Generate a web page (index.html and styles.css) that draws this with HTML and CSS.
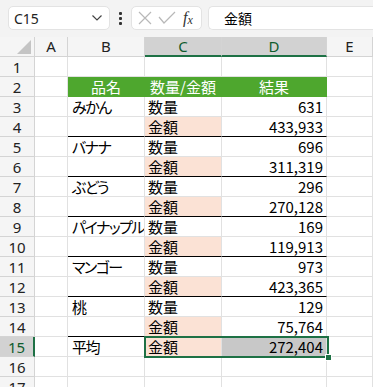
FILE: index.html
```html
<!DOCTYPE html>
<html lang="ja">
<head>
    <meta charset="UTF-8">
    <title>Sheet</title>
    <link rel="stylesheet" href="styles.css">
</head>
<body>

    <div class="toolbar">
        <div class="namebox">
            <span>C15</span>
            <svg width="12" height="8" viewBox="0 0 12 8"><path d="M1.5 1.5 L6 6 L10.5 1.5" fill="none" stroke="#444" stroke-width="1.2"/></svg>
        </div>
        <div class="grip"><i></i><i></i><i></i></div>
        <div class="fxbtns">
            <svg width="16" height="16" viewBox="0 0 16 16"><path d="M2 2 L14 14 M14 2 L2 14" stroke="#b8b8b8" stroke-width="1.2"/></svg>
            <svg width="18" height="16" viewBox="0 0 18 16"><path d="M1 7 L6 13 L17 2" fill="none" stroke="#b8b8b8" stroke-width="1.2"/></svg>
            <span class="fx">f<sub>x</sub></span>
        </div>
        <div class="formula">金額</div>
    </div>

    <div class="sheet">
        <div class="row head">
            <div class="corner"><span></span></div>
            <div class="ch">A</div>
            <div class="ch">B</div>
            <div class="ch on">C</div>
            <div class="ch on">D</div>
            <div class="ch">E</div>
        </div>
        <div class="row">
            <div class="rh">1</div><div class="c"></div><div class="c"></div><div class="c"></div><div class="c"></div><div class="c"></div>
        </div>
        <div class="row">
            <div class="rh">2</div><div class="c"></div><div class="c hd">品名</div><div class="c hd">数量/金額</div><div class="c hd">結果</div><div class="c"></div>
        </div>
        <div class="row">
            <div class="rh">3</div><div class="c"></div><div class="c name">みかん</div><div class="c">数量</div><div class="c num">631</div><div class="c"></div>
        </div>
        <div class="row sep">
            <div class="rh">4</div><div class="c"></div><div class="c"></div><div class="c pk">金額</div><div class="c num">433,933</div><div class="c"></div>
        </div>
        <div class="row">
            <div class="rh">5</div><div class="c"></div><div class="c name">バナナ</div><div class="c">数量</div><div class="c num">696</div><div class="c"></div>
        </div>
        <div class="row sep">
            <div class="rh">6</div><div class="c"></div><div class="c"></div><div class="c pk">金額</div><div class="c num">311,319</div><div class="c"></div>
        </div>
        <div class="row">
            <div class="rh">7</div><div class="c"></div><div class="c name">ぶどう</div><div class="c">数量</div><div class="c num">296</div><div class="c"></div>
        </div>
        <div class="row sep">
            <div class="rh">8</div><div class="c"></div><div class="c"></div><div class="c pk">金額</div><div class="c num">270,128</div><div class="c"></div>
        </div>
        <div class="row">
            <div class="rh">9</div><div class="c"></div><div class="c name">パイナップル</div><div class="c">数量</div><div class="c num">169</div><div class="c"></div>
        </div>
        <div class="row sep">
            <div class="rh">10</div><div class="c"></div><div class="c"></div><div class="c pk">金額</div><div class="c num">119,913</div><div class="c"></div>
        </div>
        <div class="row">
            <div class="rh">11</div><div class="c"></div><div class="c name">マンゴー</div><div class="c">数量</div><div class="c num">973</div><div class="c"></div>
        </div>
        <div class="row sep">
            <div class="rh">12</div><div class="c"></div><div class="c"></div><div class="c pk">金額</div><div class="c num">423,365</div><div class="c"></div>
        </div>
        <div class="row">
            <div class="rh">13</div><div class="c"></div><div class="c name">桃</div><div class="c">数量</div><div class="c num">129</div><div class="c"></div>
        </div>
        <div class="row sep">
            <div class="rh">14</div><div class="c"></div><div class="c"></div><div class="c pk">金額</div><div class="c num">75,764</div><div class="c"></div>
        </div>
        <div class="row current">
            <div class="rh on">15</div><div class="c"></div><div class="c name">平均</div><div class="c pk">金額</div><div class="c num tint">272,404</div><div class="c"></div>
            <div class="selection"><span class="handle"></span></div>
        </div>
        <div class="row">
            <div class="rh">16</div><div class="c"></div><div class="c"></div><div class="c"></div><div class="c"></div><div class="c"></div>
        </div>
        <div class="row">
            <div class="rh">17</div><div class="c"></div><div class="c"></div><div class="c"></div><div class="c"></div><div class="c"></div>
        </div>
    </div>

</body>
</html>
```

FILE: styles.css
```css
body {
    margin: 0;
    width: 373px;
    height: 387px;
    overflow: hidden;
    background-color: #fff;
    font-family: "Noto Sans CJK JP", sans-serif;
    color: #000;
}

/* formula bar */
.toolbar {
    height: 37px;
    background-color: #f3f3f3;
    display: flex;
    align-items: flex-start;
    padding: 6px 0 0 8px;
    box-sizing: border-box;
}

.namebox {
    width: 102px;
    height: 24px;
    box-sizing: border-box;
    background-color: #fff;
    border: 1px solid #e3e3e3;
    border-radius: 5px;
    display: flex;
    align-items: center;
    justify-content: space-between;
    padding: 0 6px 0 5px;
    font-family: "Noto Sans", sans-serif;
    font-size: 14px;
    color: #222;
}

.grip {
    width: 21px;
    display: flex;
    flex-direction: column;
    align-items: center;
    gap: 2px;
    padding-top: 6px;
}

.grip i {
    width: 3px;
    height: 3px;
    background-color: #333;
    border-radius: 1px;
}

.fxbtns {
    width: 71px;
    height: 24px;
    box-sizing: border-box;
    background-color: #fff;
    border: 1px solid #e3e3e3;
    border-radius: 5px;
    display: flex;
    align-items: center;
    gap: 5px;
    padding-left: 5px;
}

.fx {
    font-family: "Liberation Serif", serif;
    font-style: italic;
    font-size: 16px;
    color: #333;
    margin-left: 2px;
}

.fx sub {
    font-size: 12px;
    vertical-align: -1px;
}

.formula {
    flex: 1;
    height: 24px;
    margin-left: 6px;
    box-sizing: border-box;
    background-color: #fff;
    border: 1px solid #e3e3e3;
    border-right: none;
    border-radius: 5px 0 0 5px;
    padding-left: 15px;
    font-size: 14px;
    line-height: 22px;
}

/* grid */
.row {
    display: grid;
    grid-template-columns: 35px 33px 77px 77px 105px 46px;
    height: 20px;
}

.row > div {
    box-sizing: border-box;
    border-right: 1px solid #e1e1e1;
    border-bottom: 1px solid #e1e1e1;
    font-size: 15px;
    line-height: 20px;
    white-space: nowrap;
    overflow: hidden;
}

.head > div {
    background-color: #f5f5f5;
    border-color: #d4d4d4;
    font-family: "Noto Sans", sans-serif;
    font-size: 15px;
    color: #222;
    text-align: center;
    line-height: 19px;
}

.head .on {
    background-color: #d2d2d2;
    color: #0f5c2e;
    border-bottom: 2px solid #1e7145;
}

.corner {
    position: relative;
}

.corner span {
    position: absolute;
    right: 3px;
    bottom: 2px;
    width: 0;
    height: 0;
    border-left: 14px solid transparent;
    border-bottom: 14px solid #c4c4c4;
}

.row > .rh {
    background-color: #f5f5f5;
    border-color: #d4d4d4;
    font-family: "Noto Sans", sans-serif;
    color: #222;
    text-align: center;
}

.row > .rh.on {
    background-color: #d2d2d2;
    color: #0f5c2e;
    border-right: 2px solid #1e7145;
}

.c {
    padding: 0 3px;
}

.row > .name {
    font-feature-settings: "palt";
    letter-spacing: -1.5px;
    padding-left: 4px;
}

.row > .hd {
    background-color: #4ea72e;
    border-color: #4ea72e;
    color: #fff;
    text-align: center;
}

.row > .pk {
    background-color: #fbe2d5;
}

.num {
    text-align: right;
}

.row > .tint {
    background-color: #c8c8c8;
}

.sep > .c:nth-child(3),
.sep > .c:nth-child(4),
.sep > .c:nth-child(5) {
    border-bottom-color: #000;
}

/* selection C15:D15 */
.current {
    position: relative;
}

.row > .selection {
    position: absolute;
    left: 144px;
    top: -1px;
    width: 185px;
    height: 22px;
    border: 2px solid #1e7145;
    box-sizing: border-box;
    overflow: visible;
}

.handle {
    position: absolute;
    right: -5px;
    bottom: -5px;
    width: 5px;
    height: 5px;
    background-color: #1e7145;
    border: 1px solid #fff;
}
```
